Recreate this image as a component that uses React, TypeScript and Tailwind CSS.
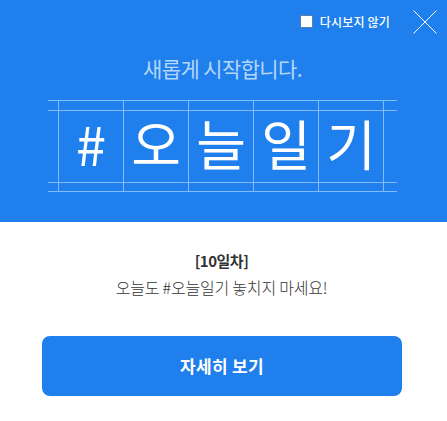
import React from 'react';

const cells = ['#', '오', '늘', '일', '기'];

const App = () => {
    return (
        <div className="w-[447px] h-[421px] bg-white overflow-hidden" style={{ fontFamily: '"Noto Sans CJK KR", "Noto Sans", sans-serif' }}>
            {/* Blue banner */}
            <div className="h-[222px] bg-[#1f7fec] flex flex-col">
                <div className="h-[46px] flex items-start justify-end">
                    <div className="flex items-center mt-[13px] mr-[23px] h-[17px]">
                        <span className="w-[13px] h-[13px] bg-white rounded-[1px] border border-[#5b7fa8] mr-[7px]" />
                        <span className="text-[12px] leading-none text-white font-medium tracking-[0.2px]">다시보지 않기</span>
                    </div>
                    <svg width="24" height="24" viewBox="0 0 24 24" className="mt-[10px] mr-[10px] text-white" fill="none" stroke="currentColor" strokeWidth="1">
                        <path d="M0.5 0.5L23.5 23.5M23.5 0.5L0.5 23.5" />
                    </svg>
                </div>
                <p className="text-center text-[21px] leading-[32px] font-normal text-[#b5d6fb] tracking-[-0.6px] mt-[6px] pr-[2px]">새롭게 시작합니다.</p>

                {/* Title on grid paper */}
                <div className="relative ml-[48px] w-[349px] h-[92px] mt-[16px] border-y border-[#82bcfa] flex pl-[10px]">
                    <div className="absolute inset-x-0 top-[9px] bottom-[8px] border-y border-[#82bcfa]" />
                    {cells.map((c) => (
                        <div key={c} className="w-[65px] border-l border-[#82bcfa] flex items-center justify-center pb-[6px] text-[54px] leading-none text-white">
                            {c}
                        </div>
                    ))}
                    <div className="w-[13px] border-l border-[#82bcfa]" />
                </div>
            </div>

            {/* Message */}
            <div className="flex flex-col items-center pt-[28px] pr-[4px]">
                <p className="text-[15px] leading-[22px] font-bold text-[#333333] tracking-[-0.5px]">[10일차]</p>
                <p className="text-[16px] leading-[24px] font-light text-[#333333] tracking-[-0.2px] mt-[3px]">오늘도 #오늘일기 놓치지 마세요!</p>
            </div>

            <div className="pl-[42px] mt-[37px]">
                <button className="w-[360px] h-[60px] bg-[#1f7fec] rounded-[8px] text-white text-[17px] font-bold tracking-[0.3px]">자세히 보기</button>
            </div>
        </div>
    );
};

export default App;
